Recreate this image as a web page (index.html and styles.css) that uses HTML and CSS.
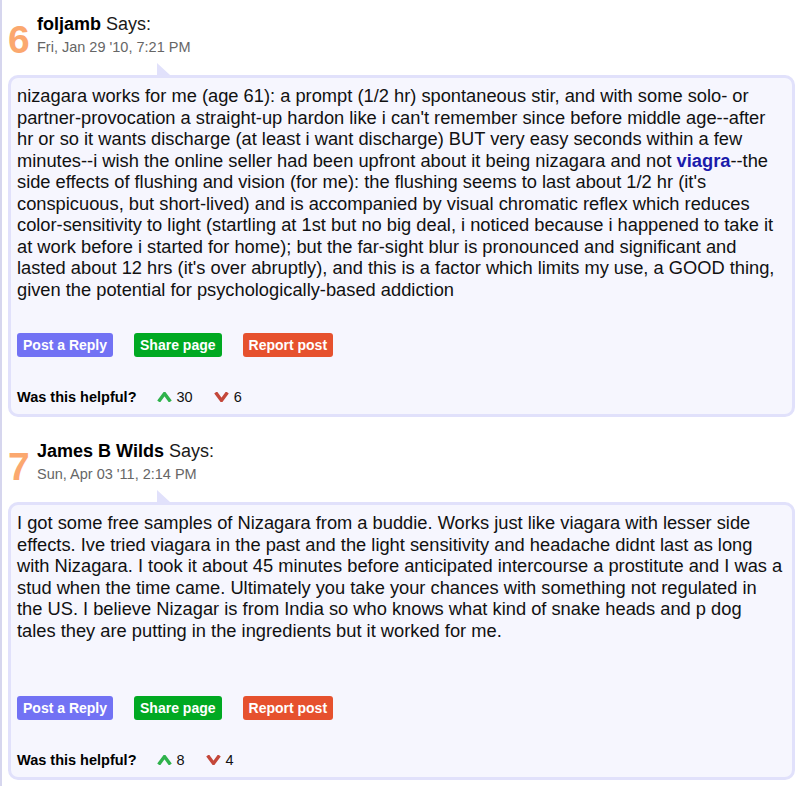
FILE: index.html
```html
<!DOCTYPE html>
<html lang="en">
<head>
  <meta charset="UTF-8">
  <meta name="viewport" content="width=device-width, initial-scale=1">
  <title>Comments</title>
  <link rel="stylesheet" href="styles.css">
</head>
<body>

<div class="page">

  <div class="comment">
    <div class="comment-head">
      <span class="num">6</span>
      <div class="meta">
        <div class="author"><b>foljamb</b> Says:</div>
        <div class="date">Fri, Jan 29 '10, 7:21 PM</div>
      </div>
    </div>
    <div class="bubble">
      <p class="text">nizagara works for me (age 61): a prompt (1/2 hr) spontaneous stir, and with some solo- or partner-provocation a straight-up hardon like i can't remember since before middle age--after hr or so it wants discharge (at least i want discharge) BUT very easy seconds within a few minutes--i wish the online seller had been upfront about it being nizagara and not <a href="#">viagra</a>--the side effects of flushing and vision (for me): the flushing seems to last about 1/2 hr (it's conspicuous, but short-lived) and is accompanied by visual chromatic reflex which reduces color-sensitivity to light (startling at 1st but no big deal, i noticed because i happened to take it at work before i started for home); but the far-sight blur is pronounced and significant and lasted about 12 hrs (it's over abruptly), and this is a factor which limits my use, a GOOD thing, given the potential for psychologically-based addiction</p>
      <div class="actions">
        <a href="#" class="btn btn-reply">Post a Reply</a>
        <a href="#" class="btn btn-share">Share page</a>
        <a href="#" class="btn btn-report">Report post</a>
      </div>
      <div class="helpful">
        <span class="helpful-label">Was this helpful?</span>
        <span class="vote vote-up">
          <svg width="15" height="10" viewBox="0 0 15 10"><polyline points="1.6,9.6 7.5,1.6 13.4,9.6" fill="none" stroke="#2fb24c" stroke-width="3.4"/></svg>
          30
        </span>
        <span class="vote vote-down">
          <svg width="15" height="10" viewBox="0 0 15 10"><polyline points="1.6,0.4 7.5,8.4 13.4,0.4" fill="none" stroke="#c4473a" stroke-width="3.4"/></svg>
          6
        </span>
      </div>
    </div>
  </div>

  <div class="comment">
    <div class="comment-head">
      <span class="num">7</span>
      <div class="meta">
        <div class="author"><b>James B Wilds</b> Says:</div>
        <div class="date">Sun, Apr 03 '11, 2:14 PM</div>
      </div>
    </div>
    <div class="bubble">
      <p class="text">I got some free samples of Nizagara from a buddie. Works just like viagara with lesser side effects. Ive tried viagara in the past and the light sensitivity and headache didnt last as long with Nizagara. I took it about 45 minutes before anticipated intercourse a prostitute and I was a stud when the time came. Ultimately you take your chances with something not regulated in the US. I believe Nizagar is from India so who knows what kind of snake heads and p dog tales they are putting in the ingredients but it worked for me.<br><br></p>
      <div class="actions">
        <a href="#" class="btn btn-reply">Post a Reply</a>
        <a href="#" class="btn btn-share">Share page</a>
        <a href="#" class="btn btn-report">Report post</a>
      </div>
      <div class="helpful">
        <span class="helpful-label">Was this helpful?</span>
        <span class="vote vote-up">
          <svg width="15" height="10" viewBox="0 0 15 10"><polyline points="1.6,9.6 7.5,1.6 13.4,9.6" fill="none" stroke="#2fb24c" stroke-width="3.4"/></svg>
          8
        </span>
        <span class="vote vote-down">
          <svg width="15" height="10" viewBox="0 0 15 10"><polyline points="1.6,0.4 7.5,8.4 13.4,0.4" fill="none" stroke="#c4473a" stroke-width="3.4"/></svg>
          4
        </span>
      </div>
    </div>
  </div>

</div>

</body>
</html>
```

FILE: styles.css
```css
body {
  margin: 0;
  padding: 0;
  background-color: #ffffff;
  font-family: "Liberation Sans", Arial, sans-serif;
  color: #111111;
}

.page {
  border-left: 2px solid #d6d6ee;
  padding: 14px 15px 0 6px;
  min-height: 786px;
  box-sizing: border-box;
}

.comment + .comment {
  margin-top: 24px;
}

.comment-head {
  display: flex;
  align-items: flex-end;
}

.num {
  width: 29px;
  font-size: 39px;
  line-height: 39px;
  font-weight: bold;
  color: #fba86f;
  margin-bottom: -2px;
}

.author {
  font-size: 18px;
  line-height: 21px;
  color: #1a1a1a;
}

.author b {
  color: #000;
}

.date {
  margin-top: 2px;
  font-size: 14.5px;
  line-height: 20px;
  color: #666666;
}

.bubble {
  position: relative;
  margin-top: 18px;
  padding: 7px 8px 8px 6px;
  border: 3px solid #e1e1fb;
  border-radius: 10px;
  background-color: #f6f6fe;
}

.bubble::before {
  content: "";
  position: absolute;
  left: 146px;
  top: -15px;
  width: 0;
  height: 0;
  border-bottom: 12px solid #e1e1fb;
  border-right: 13px solid transparent;
}

.text {
  margin: 0;
  font-size: 18.3px;
  line-height: 21.5px;
  color: #111111;
}

.text a {
  color: #1b1bab;
  font-weight: bold;
  text-decoration: none;
}

.actions {
  display: flex;
  gap: 21px;
  margin-top: 33px;
}

.btn {
  display: block;
  height: 24px;
  line-height: 24px;
  padding: 0 6px;
  border-radius: 3px;
  font-size: 14px;
  font-weight: bold;
  color: #fff;
  text-decoration: none;
}

.btn-reply {
  background-color: #7272f4;
}

.btn-share {
  background-color: #00a922;
}

.btn-report {
  background-color: #e6512e;
}

.helpful {
  display: flex;
  align-items: center;
  margin-top: 31px;
  font-size: 14.5px;
  line-height: 18px;
}

.helpful-label {
  font-weight: bold;
  color: #000;
}

.vote {
  display: flex;
  align-items: center;
  gap: 5px;
  color: #111;
}

.vote-up {
  margin-left: 20px;
}

.vote-down {
  margin-left: 21px;
}
```
